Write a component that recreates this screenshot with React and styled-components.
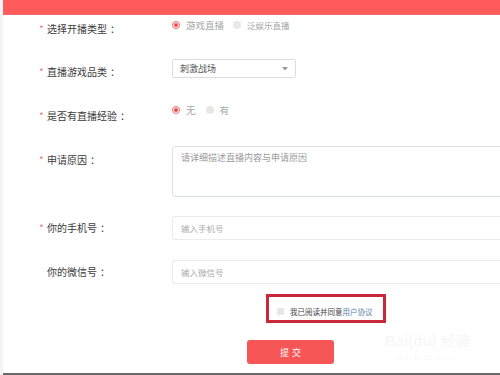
import React from "react";
import styled, { createGlobalStyle } from "styled-components";

const GlobalStyle = createGlobalStyle`
  body {
    margin: 0;
    background: #ffffff;
    font-family: "Noto Sans CJK SC", "Noto Sans", sans-serif;
  }
  * { box-sizing: border-box; }
`;

const Page = styled.div`
  position: relative;
  width: 500px;
  height: 375px;
  overflow: hidden;
  display: flex;
  flex-direction: column;
  background: #fff;
  border-left: 3px solid #f4f4f4;
`;

const Header = styled.div`
  height: 15px;
  flex-shrink: 0;
  background: #ff5b5b;
  border-bottom: 1px solid #ec6a72;
`;

const Form = styled.div`
  flex: 1;
  display: flex;
  flex-direction: column;
`;

const Row = styled.div`
  display: flex;
  align-items: flex-start;
  height: ${({ $h }) => $h}px;
  margin-top: ${({ $gap }) => $gap}px;
`;

const Label = styled.div`
  width: 169px;
  flex-shrink: 0;
  padding-left: 36px;
  margin-top: ${({ $offset }) => $offset || 0}px;
  font-size: 10px;
  line-height: 20px;
  color: #3c3c3c;
  white-space: nowrap;
`;

const Star = styled.span`
  display: inline-block;
  width: 8px;
  color: #f0787c;
  font-size: 10px;
`;

const Colon = styled.span`
  margin-left: 3px;
`;

const Control = styled.div`
  flex: 1;
  display: flex;
  align-items: center;
`;

const RadioGroup = styled.div`
  display: flex;
  align-items: center;
  height: 20px;
`;

const RadioItem = styled.label`
  display: flex;
  align-items: center;
  margin-right: ${({ $space }) => $space}px;
  font-size: ${({ $size }) => $size}px;
  color: #a8a8a8;
`;

const RadioDot = styled.span`
  position: relative;
  width: 8px;
  height: 8px;
  border-radius: 50%;
  margin-right: 6px;
  background: ${({ $on }) => ($on ? "#fff" : "#e8e8e8")};
  border: ${({ $on }) => ($on ? "1px solid #f26a6a" : "none")};
  &::after {
    content: "";
    display: ${({ $on }) => ($on ? "block" : "none")};
    position: absolute;
    left: 1px;
    top: 1px;
    width: 4px;
    height: 4px;
    border-radius: 50%;
    background: #f24b4b;
  }
`;

const Select = styled.div`
  width: 124px;
  height: 19px;
  border: 1px solid #dcdcdc;
  border-radius: 2px;
  display: flex;
  align-items: center;
  justify-content: space-between;
  padding: 0 7px 0 7px;
  font-size: 9px;
  color: #555;
`;

const TextArea = styled.textarea`
  width: 340px;
  height: 51px;
  border: 1px solid #d9e1e7;
  border-radius: 3px;
  padding: 4px 8px;
  font-family: inherit;
  font-size: 9px;
  line-height: 13px;
  resize: none;
  outline: none;
  &::placeholder { color: #9a9a9a; }
`;

const Input = styled.input`
  width: 340px;
  height: 24px;
  border: 1px solid #ececec;
  border-radius: 2px;
  padding: 0 8px;
  font-family: inherit;
  font-size: 8.5px;
  outline: none;
  &::placeholder { color: #ababab; }
`;

const AgreeRow = styled.div`
  display: flex;
  margin-top: 10px;
  padding-left: 263px;
`;

const AgreeBox = styled.div`
  width: 120px;
  height: 29px;
  border: 3px solid #c9283b;
  display: flex;
  align-items: center;
  padding: 5px 0 0 8px;
  font-size: 7.5px;
  color: #444;
  white-space: nowrap;
`;

const CheckBox = styled.span`
  width: 7px;
  height: 7px;
  border-radius: 1px;
  background: #e6e6e6;
  margin-right: 6px;
`;

const Link = styled.span`
  color: #5b7fa8;
`;

const ButtonRow = styled.div`
  display: flex;
  margin-top: 17px;
  padding-left: 244px;
`;

const Submit = styled.button`
  width: 87px;
  height: 24px;
  border: none;
  border-radius: 3px;
  background: #f65656;
  color: #fff;
  font-family: inherit;
  font-size: 9px;
  letter-spacing: 3px;
  padding: 0 0 0 3px;
`;

const BottomBar = styled.div`
  height: 2px;
  flex-shrink: 0;
  background: #6a6a6a;
`;

const Watermark = styled.div`
  position: absolute;
  left: 382px;
  top: 322px;
  display: flex;
  flex-direction: column;
  align-items: center;
  color: rgba(0, 0, 0, 0.05);
  pointer-events: none;
`;

const WaterLogo = styled.div`
  font-family: "Liberation Sans", sans-serif;
  font-size: 15px;
  font-weight: bold;
  line-height: 18px;
  margin-top: 10px;
`;

const WaterUrl = styled.div`
  font-family: "Liberation Sans", sans-serif;
  font-size: 8px;
  margin-top: 3px;
`;

function Radio({ on, children, space, size }) {
  return (
    <RadioItem $space={space} $size={size}>
      <RadioDot $on={on} />
      {children}
    </RadioItem>
  );
}

function FieldLabel({ required, offset, children }) {
  return (
    <Label $offset={offset}>
      <Star>{required ? "*" : ""}</Star>
      {children}
      <Colon>：</Colon>
    </Label>
  );
}

export default function App() {
  return (
    <>
      <GlobalStyle />
      <Page>
        <Header />
        <Form>
          <Row $gap={0} $h={20}>
            <FieldLabel required offset={4}>选择开播类型</FieldLabel>
            <Control>
              <RadioGroup>
                <Radio on space={9} size={9.5}>游戏直播</Radio>
                <Radio space={0} size={8.5}>泛娱乐直播</Radio>
              </RadioGroup>
            </Control>
          </Row>
          <Row $gap={24} $h={19}>
            <FieldLabel required offset={3}>直播游戏品类</FieldLabel>
            <Control>
              <Select>
                刺激战场
                <svg width="6" height="4" viewBox="0 0 6 4">
                  <path d="M0 0 L6 0 L3 3.5 Z" fill="#999" />
                </svg>
              </Select>
            </Control>
          </Row>
          <Row $gap={22} $h={20}>
            <FieldLabel required offset={6}>是否有直播经验</FieldLabel>
            <Control>
              <RadioGroup>
                <Radio on space={10} size={9.5}>无</Radio>
                <Radio space={0} size={9.5}>有</Radio>
              </RadioGroup>
            </Control>
          </Row>
          <Row $gap={26} $h={51}>
            <FieldLabel required offset={4}>申请原因</FieldLabel>
            <Control>
              <TextArea placeholder="请详细描述直播内容与申请原因" />
            </Control>
          </Row>
          <Row $gap={19} $h={24}>
            <FieldLabel required offset={2}>你的手机号</FieldLabel>
            <Control>
              <Input placeholder="输入手机号" />
            </Control>
          </Row>
          <Row $gap={20} $h={24}>
            <FieldLabel offset={2}>你的微信号</FieldLabel>
            <Control>
              <Input placeholder="输入微信号" />
            </Control>
          </Row>
          <AgreeRow>
            <AgreeBox>
              <CheckBox />
              我已阅读并同意<Link>用户协议</Link>
            </AgreeBox>
          </AgreeRow>
          <ButtonRow>
            <Submit>提交</Submit>
          </ButtonRow>
        </Form>
        <BottomBar />
        <Watermark>
          <WaterLogo>Bai(du) 经验</WaterLogo>
          <WaterUrl>jingyan.baidu.com</WaterUrl>
        </Watermark>
      </Page>
    </>
  );
}
